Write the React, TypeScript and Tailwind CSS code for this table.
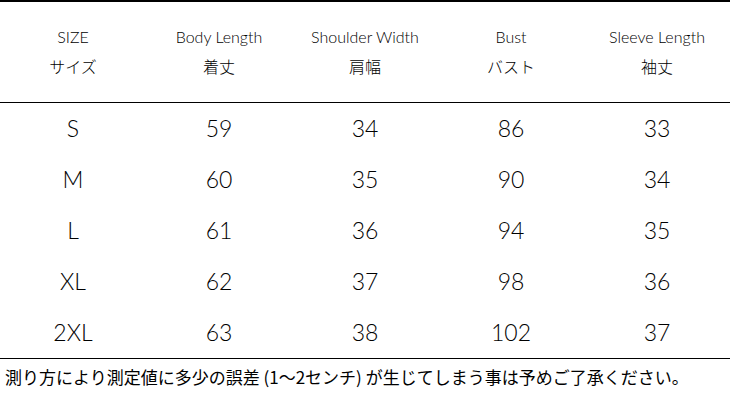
import React from 'react';

const columns = [
  { en: 'SIZE', ja: 'サイズ' },
  { en: 'Body Length', ja: '着丈' },
  { en: 'Shoulder Width', ja: '肩幅' },
  { en: 'Bust', ja: 'バスト' },
  { en: 'Sleeve Length', ja: '袖丈' },
];

const rows = [
  ['S', '59', '34', '86', '33'],
  ['M', '60', '35', '90', '34'],
  ['L', '61', '36', '94', '35'],
  ['XL', '62', '37', '98', '36'],
  ['2XL', '63', '38', '102', '37'],
];

const latin = "font-['Lato','Noto_Sans_CJK_JP',sans-serif] font-light";

export default function App() {
  return (
    <div className="w-[730px] h-[400px] bg-white text-black overflow-hidden">
      <div className="border-t-2 border-b border-black h-[103px] grid grid-cols-5 content-center">
        {columns.map((c) => (
          <div key={c.en} className="flex flex-col items-center -mt-[1px]">
            <span className={`${latin} text-[16px] leading-[20px]`}>{c.en}</span>
            <span className="font-['Noto_Sans_CJK_JP',sans-serif] font-light text-[16px] leading-[20px] mt-[9px]">{c.ja}</span>
          </div>
        ))}
      </div>
      <div className="border-b border-black h-[256px]">
        {rows.map((r) => (
          <div key={r[0]} className="grid grid-cols-5 h-[51px] items-center">
            {r.map((v, i) => (
              <span key={i} className={`${latin} text-center text-[23px] leading-none`}>{v}</span>
            ))}
          </div>
        ))}
      </div>
      <p className="font-['Noto_Sans_CJK_JP',sans-serif] text-[17px] leading-[20px] pl-[5px] pt-[8px]">
        測り方により測定値に多少の誤差 (1〜2センチ) が生じてしまう事は予めご了承ください。
      </p>
    </div>
  );
}
